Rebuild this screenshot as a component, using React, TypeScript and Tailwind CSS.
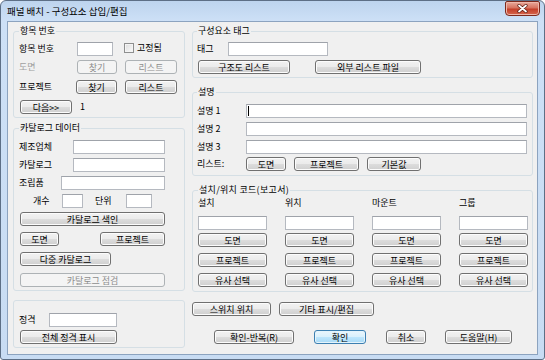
import React from "react";

type BP = {
  children: React.ReactNode;
  className?: string;
  disabled?: boolean;
  primary?: boolean;
};

function Btn({ children, className = "", disabled, primary }: BP) {
  const look = disabled
    ? "border-[#adb2b5] bg-[#f4f4f4] text-[#8d8d8d]"
    : primary
    ? "border-[#3c7fb1] bg-[linear-gradient(#eaf6fd_0%,#d9f0fc_50%,#bee6fd_50%,#a7d9f5_100%)] shadow-[inset_0_0_0_1px_#e4f4fc] text-black"
    : "border-[#707070] bg-[linear-gradient(#f2f2f2_0%,#ebebeb_50%,#dddddd_50%,#cfcfcf_100%)] shadow-[inset_0_0_0_1px_#fcfcfc] text-black";
  return (
    <div
      className={`flex h-[14px] shrink-0 items-center justify-center rounded-[3px] border text-[9px] leading-none ${look} ${className}`}
    >
      {children}
    </div>
  );
}

function Input({ className = "", children }: { className?: string; children?: React.ReactNode }) {
  return (
    <div
      className={`flex h-[14px] shrink-0 items-center border border-[#b5b9c0] border-t-[#9fa3aa] bg-white ${className}`}
    >
      {children}
    </div>
  );
}

function Row({ className = "", children }: { className?: string; children: React.ReactNode }) {
  return <div className={`flex h-[14px] items-center ${className}`}>{children}</div>;
}

export default function App() {
  return (
    <div className="font-['Noto_Sans_CJK_KR','Noto_Sans',sans-serif] text-[9px] leading-[12px] text-black">
      <div className="flex h-[360px] w-[545px] flex-col rounded-t-[6px] rounded-b-[3px] border border-[#5d6f86] bg-[linear-gradient(to_bottom,#bdd4ee,#cde0f6_20px,#c8dcf3)]">
        {/* Title bar */}
        <div className="flex h-[20px] shrink-0 items-start justify-between">
          <div className="ml-[6px] mt-[4px] text-[9.5px] leading-[12px] text-black">
            패널 배치 - 구성요소 삽입/편집
          </div>
          <div className="mr-[4px] flex h-[15px] w-[35px] items-center justify-center rounded-b-[4px] rounded-t-[2px] border border-[#7d2a1d] bg-[linear-gradient(#e8aa9c_0%,#d7735f_45%,#c4402a_55%,#d6654c_100%)] shadow-[inset_0_0_0_1px_#eeb7aa]">
            <svg width="11" height="9" viewBox="0 0 11 9">
              <path d="M2 1.5 L9 7.5 M9 1.5 L2 7.5" stroke="#5a1a10" strokeWidth="3.2" strokeLinecap="round" />
              <path d="M2 1.5 L9 7.5 M9 1.5 L2 7.5" stroke="#ffffff" strokeWidth="1.8" strokeLinecap="round" />
            </svg>
          </div>
        </div>

        {/* Client area */}
        <div className="ml-[6px] flex h-[334px] w-[531px] border border-[#8ca3bf] bg-[#f0f0f0]">
          {/* Left column */}
          <div className="ml-[5px] flex w-[172px] flex-col">
            <fieldset className="mt-[3px] min-w-0 rounded-[3px] border border-[#d5dfe5] px-[5px] pt-[5px] pb-[3px]">
              <legend className="px-[1px]">항목 번호</legend>
              <Row>
                <span className="w-[58px]">항목 번호</span>
                <Input className="w-[36px]" />
                <div className="ml-[11px] flex items-center self-start">
                  <span className="h-[10px] w-[10px] border border-[#8e8f8f] bg-[linear-gradient(135deg,#dcdcdc,#fbfbfb)] shadow-[inset_0_0_0_1px_#f4f4f4]" />
                  <span className="ml-[3px]">고정됨</span>
                </div>
              </Row>
              <Row className="mt-[4px]">
                <span className="w-[58px] text-[#a0a0a0]">도면</span>
                <Btn disabled className="w-[40px]">찾기</Btn>
                <Btn disabled className="ml-[8px] w-[52px]">리스트</Btn>
              </Row>
              <Row className="mt-[6px]">
                <span className="w-[57px]">프로젝트</span>
                <Btn className="w-[41px]">찾기</Btn>
                <Btn className="ml-[8px] w-[52px]">리스트</Btn>
              </Row>
              <Row className="mt-[6px]">
                <Btn className="ml-[1px] w-[52px]">다음&gt;&gt;</Btn>
                <span className="ml-[8px]">1</span>
              </Row>
            </fieldset>

            <fieldset className="mt-[4px] min-w-0 rounded-[3px] border border-[#d5dfe5] px-[5px] pt-[6px] pb-[3px]">
              <legend className="px-[1px]">카탈로그 데이터</legend>
              <Row>
                <span className="w-[54px]">제조업체</span>
                <Input className="w-[92px]" />
              </Row>
              <Row className="mt-[4px]">
                <span className="w-[54px]">카탈로그</span>
                <Input className="w-[92px]" />
              </Row>
              <Row className="mt-[4px]">
                <span className="w-[42px]">조립품</span>
                <Input className="w-[104px]" />
              </Row>
              <Row className="mt-[4px]">
                <span className="ml-[14px] w-[29px]">개수</span>
                <Input className="w-[21px]" />
                <span className="ml-[12px] w-[31px]">단위</span>
                <Input className="w-[26px]" />
              </Row>
              <Row className="mt-[4px]">
                <Btn className="ml-[1px] w-[145px]">카탈로그 색인</Btn>
              </Row>
              <Row className="mt-[6px]">
                <Btn className="ml-[1px] w-[39px]">도면</Btn>
                <Btn className="ml-[41px] w-[65px]">프로젝트</Btn>
              </Row>
              <Row className="mt-[6px]">
                <Btn className="ml-[1px] w-[91px]">다중 카탈로그</Btn>
              </Row>
              <Row className="mt-[7px]">
                <Btn disabled className="ml-[1px] w-[145px]">카탈로그 점검</Btn>
              </Row>
            </fieldset>

            <div className="mt-[9px] rounded-[3px] border border-[#d5dfe5] px-[5px] pt-[12px] pb-[3px]">
              <Row>
                <span className="w-[30px]">정격</span>
                <Input className="w-[68px]" />
              </Row>
              <Row className="mt-[3px]">
                <Btn className="ml-[1px] w-[97px]">전체 정격 표시</Btn>
              </Row>
            </div>
          </div>

          {/* Right column */}
          <div className="ml-[7px] flex w-[341px] flex-col">
            <fieldset className="mt-[3px] min-w-0 rounded-[3px] border border-[#d5dfe5] pl-[4px] pr-[4px] pt-[5px] pb-[3px]">
              <legend className="px-[1px]">구성요소 태그</legend>
              <Row>
                <span className="w-[31px]">태그</span>
                <Input className="w-[100px]" />
              </Row>
              <Row className="mt-[4px]">
                <Btn className="ml-[1px] w-[92px]">구조도 리스트</Btn>
                <Btn className="ml-[25px] w-[106px]">외부 리스트 파일</Btn>
              </Row>
            </fieldset>

            <fieldset className="mt-[8px] min-w-0 rounded-[3px] border border-[#d5dfe5] pl-[4px] pr-[4px] pt-[6px] pb-[4px]">
              <legend className="px-[1px]">설명</legend>
              <Row>
                <span className="w-[49px]">설명 1</span>
                <Input className="w-[281px] pl-[1px]">
                  <span className="h-[10px] w-[1px] bg-black" />
                </Input>
              </Row>
              <Row className="mt-[4px]">
                <span className="w-[49px]">설명 2</span>
                <Input className="w-[281px]" />
              </Row>
              <Row className="mt-[4px]">
                <span className="w-[49px]">설명 3</span>
                <Input className="w-[281px]" />
              </Row>
              <Row className="mt-[3px]">
                <span className="w-[49px]">리스트:</span>
                <Btn className="w-[40px]">도면</Btn>
                <Btn className="ml-[8px] w-[65px]">프로젝트</Btn>
                <Btn className="ml-[8px] w-[54px]">기본값</Btn>
              </Row>
            </fieldset>

            <fieldset className="mt-[8px] min-w-0 rounded-[3px] border border-[#d5dfe5] pl-[5px] pr-[4px] pt-[1px] pb-[4px]">
              <legend className="px-[1px] tracking-[0.3px]">설치/위치 코드(보고서)</legend>
              <div className="flex gap-[18px]">
                {["설치", "위치", "마운트", "그룹"].map((t) => (
                  <div key={t} className="flex w-[69px] flex-col">
                    <span className="h-[12px] leading-[12px]">{t}</span>
                    <Input className="mt-[7px] w-[69px]" />
                    <Btn className="mt-[3px] w-[69px]">도면</Btn>
                    <Btn className="mt-[6px] w-[69px]">프로젝트</Btn>
                    <Btn className="mt-[6px] w-[69px]">유사 선택</Btn>
                  </div>
                ))}
              </div>
            </fieldset>

            <Row className="mt-[10px]">
              <Btn className="w-[79px]">스위치 위치</Btn>
              <Btn className="ml-[8px] w-[95px]">기타 표시/편집</Btn>
            </Row>
            <Row className="mt-[14px] ml-[22px]">
              <Btn className="w-[80px]">확인-반복(R)</Btn>
              <Btn primary className="ml-[20px] w-[52px]">확인</Btn>
              <Btn className="ml-[20px] w-[40px]">취소</Btn>
              <Btn className="ml-[19px] w-[67px]">도움말(H)</Btn>
            </Row>
          </div>
        </div>
      </div>
    </div>
  );
}
